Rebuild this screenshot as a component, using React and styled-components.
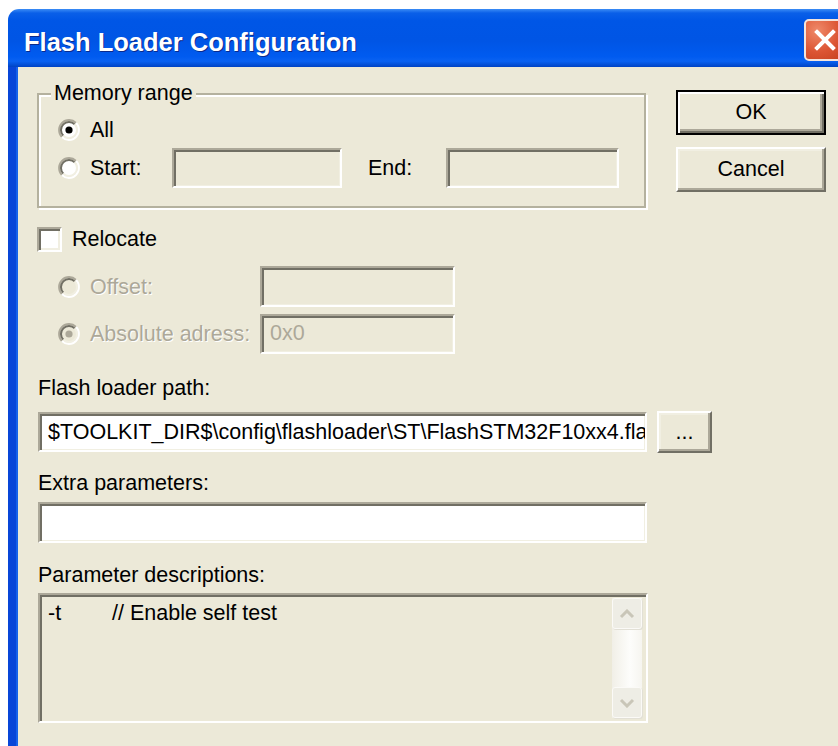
import React from 'react';
import styled, { createGlobalStyle } from 'styled-components';

const GlobalStyle = createGlobalStyle`
  html, body {
    margin: 0;
    padding: 0;
    background: #fff;
    overflow: hidden;
  }
`;

const FACE = '#ECE9D8';
const SHADOW = '#aca899';
const DARK = '#716f64';
const LIGHT = '#f1efe2';
const GRAY_TEXT = '#aca899';

const RadioIcon = ({ checked, disabled }) => (
  <svg width="22" height="22" viewBox="0 0 22 22">
    <circle cx="11" cy="11" r="8" fill={disabled ? FACE : '#fff'} />
    <path d="M3.93 18.07 A10 10 0 0 1 18.07 3.93" fill="none" stroke={SHADOW} strokeWidth="2" />
    <path d="M5.34 16.66 A8 8 0 0 1 16.66 5.34" fill="none" stroke={DARK} strokeWidth="2" />
    <path d="M18.07 3.93 A10 10 0 0 1 3.93 18.07" fill="none" stroke="#fff" strokeWidth="2" />
    <path d="M16.66 5.34 A8 8 0 0 1 5.34 16.66" fill="none" stroke={LIGHT} strokeWidth="2" />
    {checked && <circle cx="11" cy="11" r="3.6" fill={disabled ? SHADOW : '#000'} />}
  </svg>
);

const Chevron = ({ up }) => (
  <svg width="16" height="10" viewBox="0 0 16 10">
    <path
      d={up ? 'M2 8 L8 2 L14 8' : 'M2 2 L8 8 L14 2'}
      fill="none"
      stroke="#c9c6b8"
      strokeWidth="3"
    />
  </svg>
);

const CloseGlyph = () => (
  <svg width="22" height="22" viewBox="0 0 22 22">
    <path d="M3 3 L19 19 M19 3 L3 19" stroke="#fff" strokeWidth="4" strokeLinecap="square" />
  </svg>
);

const App = () => {
  return (
    <Page>
      <GlobalStyle />
      <Window>
        <TitleBar>
          <Title>Flash Loader Configuration</Title>
          <CloseButton>
            <CloseGlyph />
          </CloseButton>
        </TitleBar>
        <Frame>
          <MainColumn>
            <GroupBox>
              <Legend>Memory range</Legend>
              <OptionRow>
                <RadioIcon checked />
                <Label>All</Label>
              </OptionRow>
              <OptionRow>
                <RadioIcon />
                <Label $width={82}>Start:</Label>
                <Field $width={170} $height={40} />
                <Label $width={78} $indent={16}>End:</Label>
                <Field $width={173} $height={40} />
              </OptionRow>
            </GroupBox>

            <CheckRow>
              <CheckBox />
              <Label>Relocate</Label>
            </CheckRow>

            <SubOptions>
              <SubRow>
                <RadioIcon disabled />
                <Label $width={170} $disabled>Offset:</Label>
                <Field $width={195} $height={41} />
              </SubRow>
              <SubRow>
                <RadioIcon checked disabled />
                <Label $width={170} $disabled>Absolute adress:</Label>
                <Field $width={195} $height={40} $disabled>0x0</Field>
              </SubRow>
            </SubOptions>

            <Caption $gap={19}>Flash loader path:</Caption>
            <PathRow>
              <Field $width={609} $height={40} $white>
                $TOOLKIT_DIR$\config\flashloader\ST\FlashSTM32F10xx4.flash
              </Field>
              <PushButton $width={55} $height={42}>...</PushButton>
            </PathRow>

            <Caption $gap={18}>Extra parameters:</Caption>
            <FieldSlot>
              <Field $width={609} $height={41} $white />
            </FieldSlot>

            <Caption $gap={20}>Parameter descriptions:</Caption>
            <DescBox>
              <DescText>
                <Flag>-t</Flag>
                <span>// Enable self test</span>
              </DescText>
              <ScrollBar>
                <ScrollButton>
                  <Chevron up />
                </ScrollButton>
                <ScrollButton>
                  <Chevron />
                </ScrollButton>
              </ScrollBar>
            </DescBox>
          </MainColumn>

          <SideColumn>
            <PushButton $width={150} $height={45} $default>
              OK
            </PushButton>
            <PushButton $width={150} $height={45}>
              Cancel
            </PushButton>
          </SideColumn>
        </Frame>
      </Window>
    </Page>
  );
};

export default App;

const Page = styled.div`
  width: 838px;
  height: 746px;
  overflow: hidden;
  padding: 9px 0 0 8px;
  box-sizing: border-box;
  background: #fff;
  font-family: 'Liberation Sans', Arial, sans-serif;
  font-size: 21.5px;
  color: #000;
`;

const Window = styled.div`
  width: 852px;
  height: 760px;
  display: flex;
  flex-direction: column;
  border-radius: 11px 11px 0 0;
  overflow: hidden;
`;

const TitleBar = styled.div`
  height: 58px;
  flex: none;
  display: flex;
  align-items: center;
  justify-content: space-between;
  padding: 4px 14px 0 16px;
  box-sizing: border-box;
  background: linear-gradient(
    to bottom,
    #3b8cf5 0%,
    #0a5fe8 7%,
    #0056e6 20%,
    #0055e5 55%,
    #005bf0 82%,
    #0a62f2 90%,
    #0043c4 100%
  );
`;

const Title = styled.div`
  font-weight: bold;
  font-size: 25.5px;
  color: #fff;
  text-shadow: 1px 1px 0 #0b2a8c;
  margin-top: 4px;
`;

const CloseButton = styled.div`
  width: 42px;
  height: 42px;
  box-sizing: border-box;
  display: flex;
  align-items: center;
  justify-content: center;
  border: 2px solid #f4e4dc;
  border-radius: 5px;
  background: radial-gradient(circle at 30% 25%, #ef8a6a 0%, #dc5534 55%, #c4401f 100%);
`;

const Frame = styled.div`
  flex: 1;
  display: flex;
  align-items: flex-start;
  background: ${FACE};
  border-left: 8px solid #0846d8;
  box-shadow: inset 2px 0 0 #1662ea;
`;

const MainColumn = styled.div`
  width: 611px;
  margin-left: 21px;
  display: flex;
  flex-direction: column;
`;

const SideColumn = styled.div`
  margin-left: 28px;
  margin-top: 23px;
  display: flex;
  flex-direction: column;
  gap: 12px;
`;

const GroupBox = styled.div`
  margin-top: 26px;
  width: 609px;
  box-sizing: border-box;
  border: 2px solid #b4b19e;
  box-shadow: inset 2px 2px 0 #fff, 2px 2px 0 #fff;
  padding: 0 0 19px 19px;
`;

const Legend = styled.div`
  display: table;
  margin: -14px 0 6px -7px;
  padding: 0 3px;
  line-height: 24px;
  background: ${FACE};
`;

const OptionRow = styled.div`
  height: 38px;
  display: flex;
  align-items: center;
  gap: 10px;
`;

const Label = styled.div`
  width: ${(p) => (p.$width ? `${p.$width - 10}px` : 'auto')};
  margin-left: ${(p) => p.$indent || 0}px;
  line-height: 24px;
  white-space: nowrap;
  color: ${(p) => (p.$disabled ? GRAY_TEXT : '#000')};
  text-shadow: ${(p) => (p.$disabled ? '1px 1px 0 #fff' : 'none')};
`;

const Field = styled.div`
  width: ${(p) => p.$width}px;
  height: ${(p) => p.$height}px;
  flex: none;
  box-sizing: border-box;
  border: 2px solid;
  border-color: ${SHADOW} #fff #fff ${SHADOW};
  box-shadow: inset 2px 2px 0 ${DARK}, inset -1px -1px 0 ${LIGHT};
  background: ${(p) => (p.$white ? '#fff' : FACE)};
  color: ${(p) => (p.$disabled ? GRAY_TEXT : '#000')};
  padding: 0 0 0 8px;
  display: flex;
  align-items: center;
  white-space: nowrap;
  overflow: hidden;
`;

const CheckRow = styled.div`
  margin-top: 16px;
  height: 30px;
  display: flex;
  align-items: center;
  gap: 10px;
`;

const CheckBox = styled.div`
  width: 25px;
  height: 25px;
  box-sizing: border-box;
  background: #fff;
  border: 2px solid;
  border-color: ${SHADOW} #fff #fff ${SHADOW};
  box-shadow: inset 2px 2px 0 ${DARK}, inset -2px -2px 0 ${LIGHT};
`;

const SubOptions = styled.div`
  margin-top: 9px;
  display: flex;
  flex-direction: column;
`;

const SubRow = styled.div`
  height: 47px;
  display: flex;
  align-items: center;
  gap: 10px;
  padding-left: 21px;
`;

const Caption = styled.div`
  margin-top: ${(p) => p.$gap}px;
  line-height: 24px;
  padding-left: 1px;
`;

const PathRow = styled.div`
  margin-top: 11px;
  display: flex;
  align-items: center;
  gap: 10px;
  padding-left: 1px;
`;

const FieldSlot = styled.div`
  margin-top: 7px;
  padding-left: 1px;
`;

const PushButton = styled.div`
  width: ${(p) => p.$width}px;
  height: ${(p) => p.$height}px;
  flex: none;
  box-sizing: border-box;
  display: flex;
  align-items: center;
  justify-content: center;
  background: ${FACE};
  border: 2px solid;
  border-color: ${(p) => (p.$default ? '#000' : `#fff ${DARK} ${DARK} #fff`)};
  box-shadow: ${(p) =>
    p.$default
      ? `inset 2px 2px 0 #fff, inset -2px -2px 0 ${DARK}, inset -4px -4px 0 ${SHADOW}`
      : `inset -2px -2px 0 ${SHADOW}, inset 2px 2px 0 ${LIGHT}`};
`;

const DescBox = styled.div`
  margin-top: 6px;
  margin-left: 1px;
  width: 610px;
  height: 130px;
  box-sizing: border-box;
  display: flex;
  justify-content: space-between;
  border: 2px solid;
  border-color: ${SHADOW} #fff #fff ${SHADOW};
  box-shadow: inset 2px 2px 0 ${DARK};
  padding: 3px 4px 3px 0;
`;

const DescText = styled.div`
  display: flex;
  padding: 3px 0 0 8px;
  line-height: 24px;
`;

const Flag = styled.span`
  width: 64px;
`;

const ScrollBar = styled.div`
  width: 30px;
  display: flex;
  flex-direction: column;
  justify-content: space-between;
  background: linear-gradient(to right, #f1efe7, #fdfdfb 60%, #f6f5f0);
`;

const ScrollButton = styled.div`
  height: 31px;
  box-sizing: border-box;
  display: flex;
  align-items: center;
  justify-content: center;
  border: 1px solid #fbfaf7;
  border-radius: 3px;
  background: #eeede5;
  box-shadow: 1px 1px 0 #e2e0d6;
`;
